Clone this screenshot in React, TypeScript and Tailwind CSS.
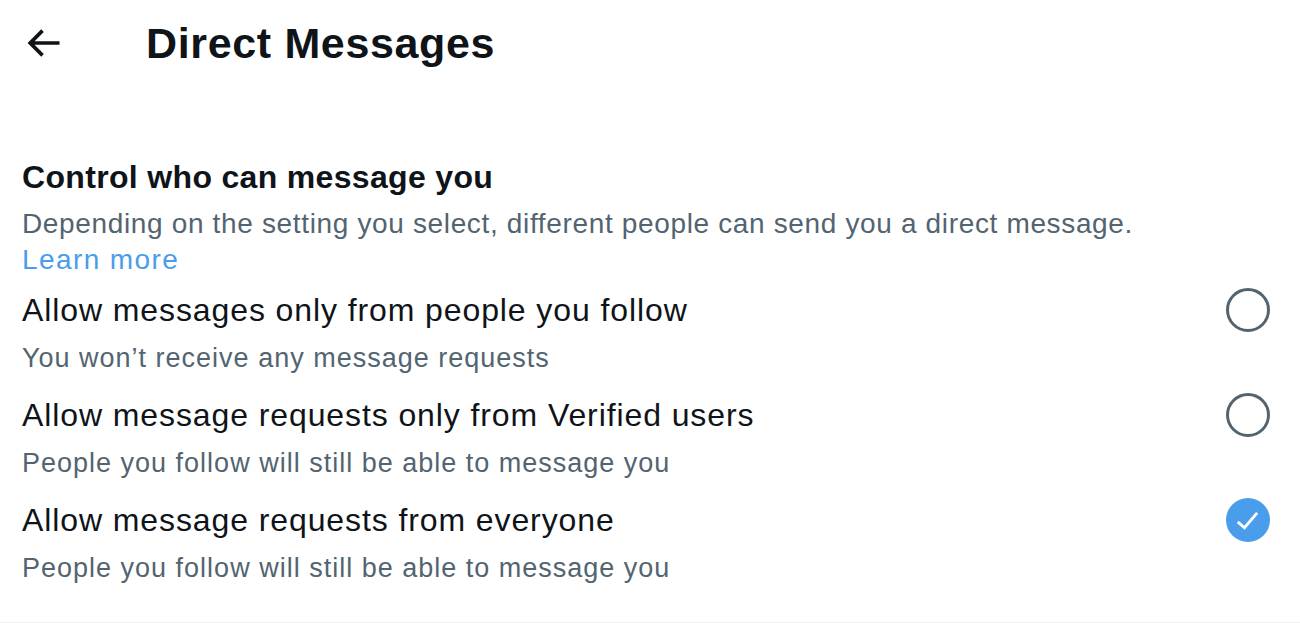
import React from "react";

const font = { fontFamily: '"Liberation Sans", Arial, sans-serif' };

function Radio({ checked }: { checked?: boolean }) {
  if (checked) {
    return (
      <div className="w-[44px] h-[44px] rounded-full bg-[#4a9deb] flex items-center justify-center shrink-0">
        <svg viewBox="0 0 24 24" className="w-[34px] h-[34px]" fill="#ffffff">
          <path d="M9.64 18.952l-5.55-4.861 1.317-1.504 3.951 3.459 8.355-9.752 1.518 1.301L9.64 18.952z" />
        </svg>
      </div>
    );
  }
  return <div className="w-[44px] h-[44px] rounded-full border-[3px] border-[#536471] shrink-0" />;
}

function Option({ title, sub, checked }: { title: string; sub: string; checked?: boolean }) {
  return (
    <div className="flex items-start justify-between mb-[19px]">
      <div className="flex flex-col">
        <div className="text-[32px] leading-[40px] tracking-[0.9px] text-[#0f1419]">{title}</div>
        <div className="mt-[10px] text-[27px] leading-[36px] tracking-[1px] text-[#536471]">{sub}</div>
      </div>
      <div className="mt-[-2px] mr-[8px]">
        <Radio checked={checked} />
      </div>
    </div>
  );
}

export default function App() {
  return (
    <div className="w-[1300px] h-[623px] bg-white overflow-hidden border-b border-[#eff3f4]" style={font}>
      <div className="flex items-center pt-[15px] pl-[21px]">
        <svg viewBox="0 0 24 24" className="w-[44px] h-[44px]" fill="#0f1419">
          <path d="M7.414 13l5.043 5.04-1.414 1.42L3.586 12l7.457-7.46 1.414 1.42L7.414 11H21v2H7.414z" />
        </svg>
        <div className="ml-[81px] text-[43px] leading-[56px] font-bold tracking-[0.65px] text-[#0f1419]">Direct Messages</div>
      </div>
      <div className="mt-[86px] px-[22px]">
        <div className="text-[32px] leading-[40px] font-bold tracking-[0.33px] text-[#0f1419]">Control who can message you</div>
        <div className="mt-[9px] text-[28px] leading-[36px] tracking-[0.65px] text-[#536471]">
          Depending on the setting you select, different people can send you a direct message.
        </div>
        <div className="text-[28px] leading-[36px] tracking-[1.4px] text-[#4a9deb]">Learn more</div>
        <div className="mt-[12px]">
          <Option title="Allow messages only from people you follow" sub="You won’t receive any message requests" />
          <Option title="Allow message requests only from Verified users" sub="People you follow will still be able to message you" />
          <Option title="Allow message requests from everyone" sub="People you follow will still be able to message you" checked />
        </div>
      </div>
    </div>
  );
}
